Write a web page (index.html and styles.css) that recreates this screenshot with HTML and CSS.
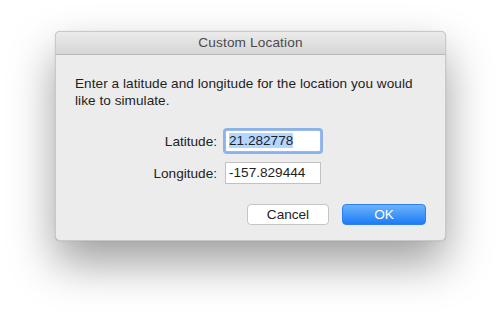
FILE: index.html
```html
<!DOCTYPE html>
<html>
<head>
<meta charset="utf-8">
<link rel="stylesheet" href="styles.css">
</head>
<body>
<div class="window">
  <div class="titlebar">Custom Location</div>
  <div class="content">
    <p class="message">Enter a latitude and longitude for the location you would like to simulate.</p>
    <div class="form">
      <label class="label">Latitude:</label>
      <div class="field focused"><span class="sel">21.282778</span></div>
      <label class="label">Longitude:</label>
      <div class="field">-157.829444</div>
    </div>
    <div class="buttons">
      <div class="btn cancel">Cancel</div>
      <div class="btn ok">OK</div>
    </div>
  </div>
</div>
</body>
</html>
```

FILE: styles.css
```css
html, body {
  margin: 0;
  padding: 0;
  background: #ffffff;
}
body {
  width: 502px;
  height: 322px;
  overflow: hidden;
  padding: 31px 0 0 55px;
  box-sizing: border-box;
  font-family: "Liberation Sans", Arial, sans-serif;
  font-size: 13.6px;
  color: #222;
}
.window {
  width: 391px;
  height: 210px;
  box-sizing: border-box;
  background: #ececec;
  border: 1px solid #c9c9c9;
  border-radius: 5px;
  box-shadow: 0 22px 45px rgba(0,0,0,0.38), 0 0 1px rgba(0,0,0,0.3);
  overflow: hidden;
}
.titlebar {
  height: 22px;
  line-height: 22px;
  text-align: center;
  color: #4a4a4a;
  letter-spacing: 0.15px;
  background: linear-gradient(#ebebeb, #d6d6d6);
  border-bottom: 1px solid #b9b9b9;
}
.content {
  padding: 20px 19px 0 19px;
}
.message {
  margin: 0;
  line-height: 17px;
  color: #1e1e1e;
  letter-spacing: 0.05px;
}
.form {
  display: grid;
  grid-template-columns: 142px 96px;
  column-gap: 8px;
  row-gap: 10px;
  align-items: center;
  margin-top: 21px;
}
.label {
  text-align: right;
}
.field {
  height: 22px;
  box-sizing: border-box;
  background: #fff;
  border: 1px solid #c2c2c2;
  line-height: 20px;
  padding-left: 3px;
  color: #1e1e1e;
}
.field.focused {
  border-color: #9bb8e6;
  box-shadow: 0 0 0 2px #8ab3ee;
  border-radius: 2px;
}
.sel {
  background: #b3d7ff;
}
.buttons {
  display: flex;
  justify-content: flex-end;
  gap: 13px;
  margin-top: 20px;
}
.btn {
  height: 21px;
  box-sizing: border-box;
  border-radius: 4px;
  text-align: center;
}
.cancel {
  width: 82px;
  background: #fff;
  border: 1px solid #c5c5c5;
  line-height: 19px;
  color: #222;
}
.ok {
  width: 84px;
  background: linear-gradient(#6cb3fa, #1b7cf6);
  color: #fff;
  border: 1px solid #2d7ef0;
  line-height: 19px;
}
```
